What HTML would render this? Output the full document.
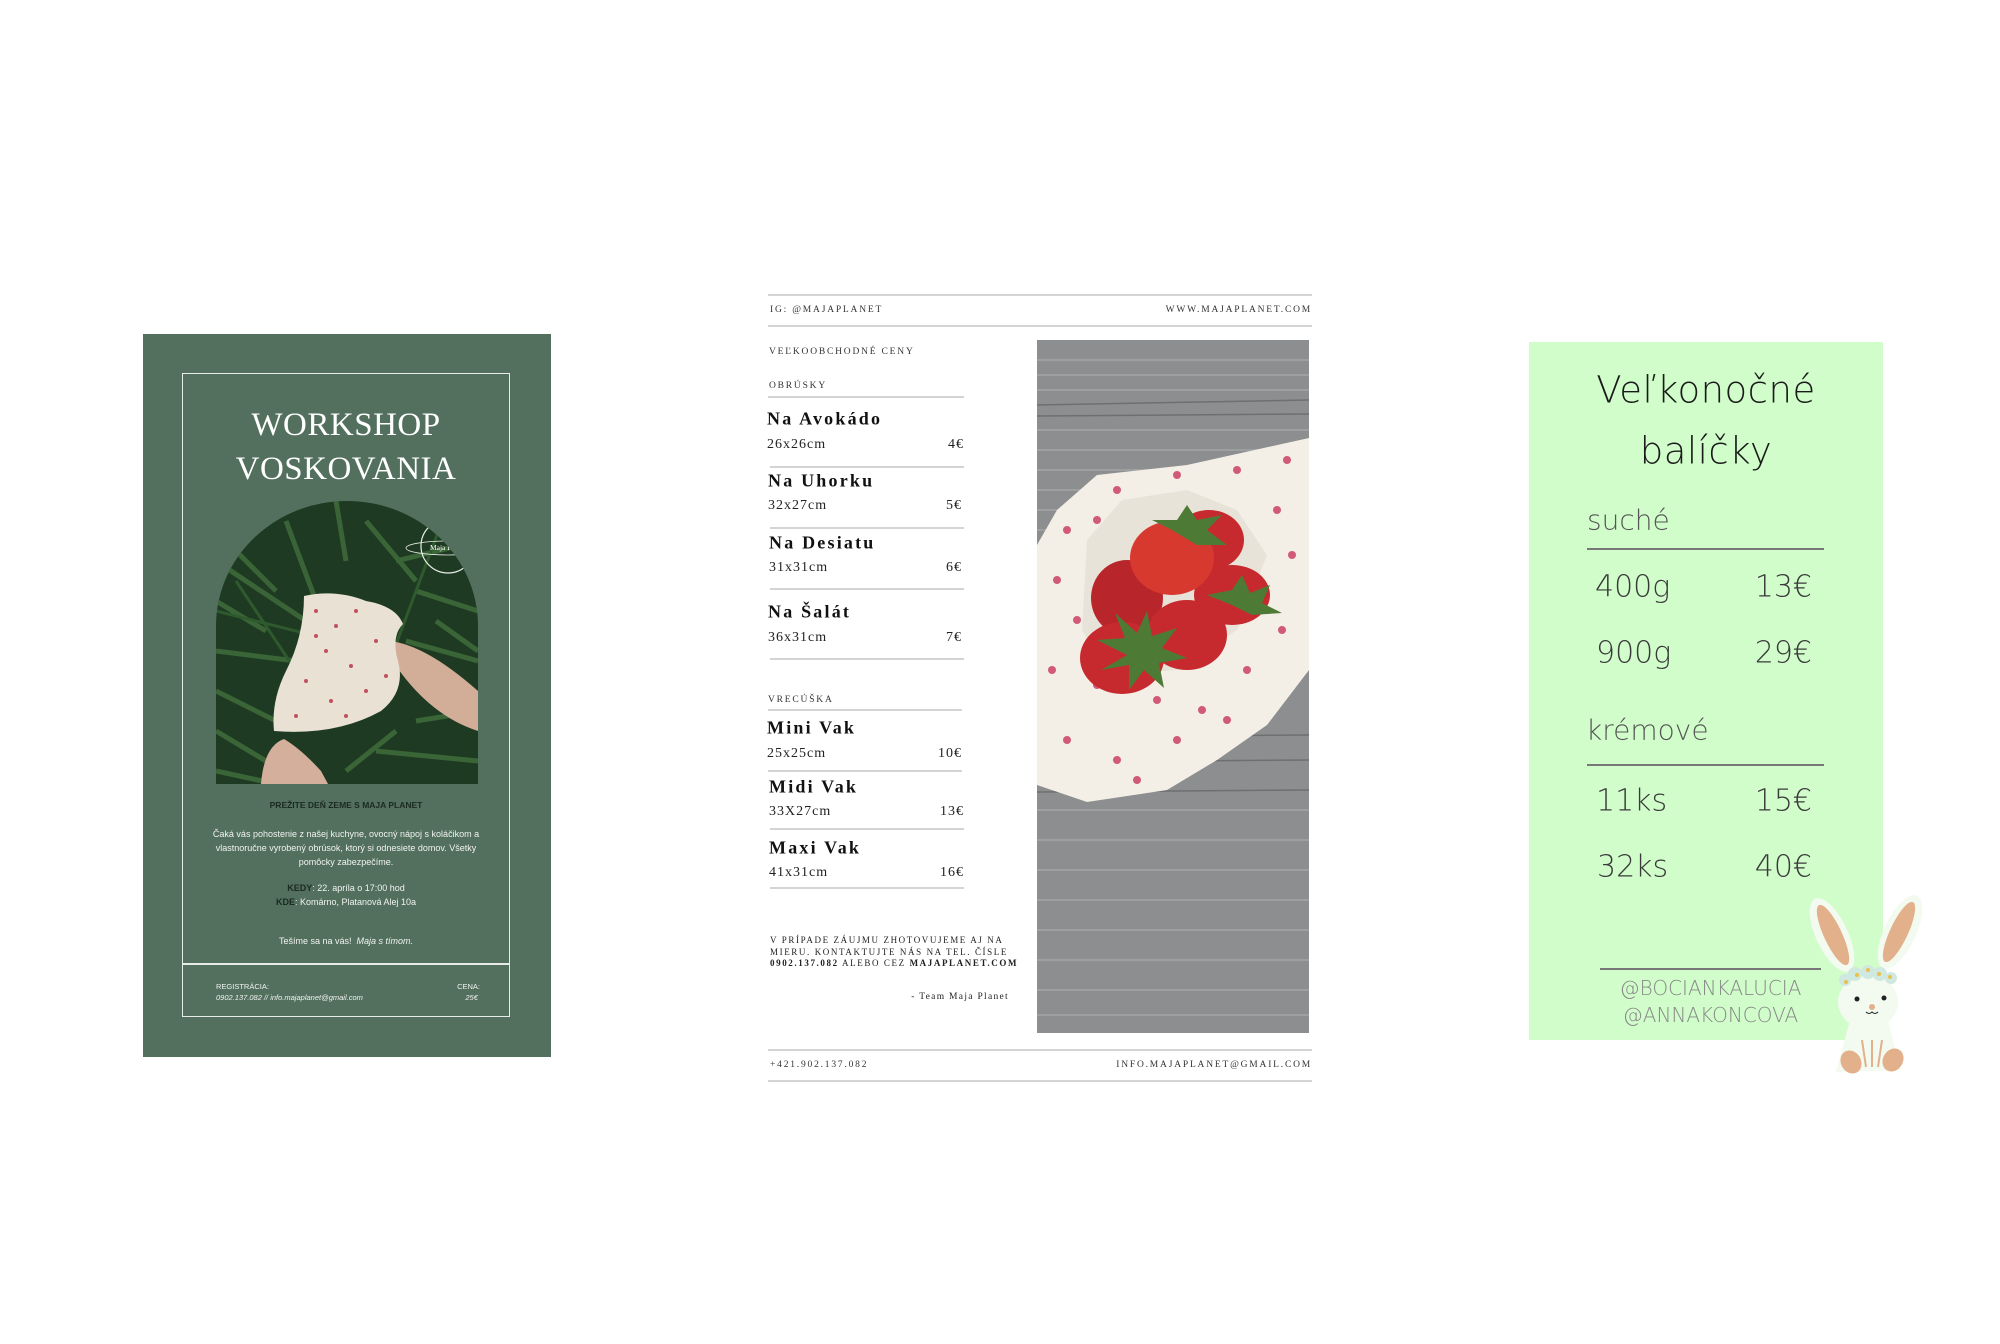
<!DOCTYPE html>
<html><head><meta charset="utf-8"><style>
*{margin:0;padding:0;box-sizing:border-box}
body{width:2000px;height:1344px;background:#fff;position:relative;overflow:hidden;font-family:"Liberation Sans",sans-serif}
.a{position:absolute;white-space:nowrap}
.c1{position:absolute;left:143px;top:334px;width:408px;height:723px;background:#53705e}
.w{color:#fff}
.ser{font-family:"Liberation Serif",serif}
.hl{position:absolute;height:2px;background:#d4d4d4}
.nm{font-family:"Liberation Serif",serif;font-weight:bold;font-size:18px;letter-spacing:2.2px;color:#111;transform:translateY(-50%)}
.sz{font-family:"Liberation Serif",serif;font-size:14px;letter-spacing:1px;color:#222;transform:translateY(-50%)}
.cap{font-family:"Liberation Serif",serif;font-size:9.5px;letter-spacing:1.8px;color:#333;transform:translateY(-50%)}
.j{font-family:"DejaVu Sans","Liberation Sans",sans-serif;font-weight:200;color:#3a3a3a;transform:translateY(-50%)}
</style></head><body>

<!-- CARD 1 -->
<div class="c1"></div>
<div class="a" style="left:182px;top:373px;width:328px;height:644px;border:1.5px solid #e8ede9"></div>
<div class="a" style="left:182px;top:963px;width:328px;height:1.5px;background:#e8ede9"></div>
<div class="a w ser" style="left:182px;width:328px;text-align:center;top:406px;font-size:33px;line-height:38px;letter-spacing:0.5px">WORKSHOP</div>
<div class="a w ser" style="left:182px;width:328px;text-align:center;top:450px;font-size:33px;line-height:38px;letter-spacing:0.5px">VOSKOVANIA</div>
<svg class="a" style="left:216px;top:501px" width="262" height="283" viewBox="0 0 262 283">
<defs><clipPath id="arch"><path d="M0 283 V125 A131 125 0 0 1 262 125 V283 Z"/></clipPath></defs>
<g clip-path="url(#arch)">
<rect width="262" height="283" fill="#1f3a22"/>
<g stroke="#3d6a3a" stroke-width="5" fill="none" opacity="0.9">
<path d="M0 60 L90 120 M10 40 L60 90 M0 150 L80 160 M0 190 L60 220 M0 230 L50 260 M0 100 L50 130"/>
<path d="M70 20 L100 100 M120 0 L130 60 M150 20 L200 80 M180 60 L262 40 M200 90 L262 110 M220 120 L262 150 M190 140 L262 160"/>
<path d="M160 250 L262 260 M200 220 L262 210 M0 270 L60 283 M130 270 L180 230"/>
</g>
<g stroke="#2e5a2d" stroke-width="3" fill="none"><path d="M20 80 L100 200 M230 10 L170 170 M0 110 L120 140"/></g>
<path d="M160 140 Q200 135 262 190 L262 230 Q215 215 180 165 Z" fill="#d2ad98"/>
<path d="M45 283 Q48 245 68 238 Q85 248 105 270 L112 283 Z" fill="#d4b09c"/>
<path d="M88 95 Q120 88 150 100 Q180 105 187 123 Q175 135 182 160 Q190 190 165 210 Q120 235 58 230 Q55 200 70 170 Q88 135 88 95 Z" fill="#e8e1d4"/>
<g fill="#c0505e"><circle cx="100" cy="110" r="2"/><circle cx="120" cy="125" r="2"/><circle cx="140" cy="110" r="2"/><circle cx="160" cy="140" r="2"/><circle cx="110" cy="150" r="2"/><circle cx="135" cy="165" r="2"/><circle cx="90" cy="180" r="2"/><circle cx="150" cy="190" r="2"/><circle cx="115" cy="200" r="2"/><circle cx="80" cy="215" r="2"/><circle cx="170" cy="175" r="2"/><circle cx="130" cy="215" r="2"/><circle cx="100" cy="135" r="2"/></g>
<circle cx="232" cy="45" r="27" fill="none" stroke="#e8ede9" stroke-width="1.2"/>
<ellipse cx="232" cy="47" rx="42" ry="7" fill="none" stroke="#e8ede9" stroke-width="0.8"/>
<text x="232" y="49" font-family="Liberation Serif" font-size="7.5" fill="#fff" text-anchor="middle">Maja Planet</text>
</g></svg>
<div class="a" style="left:182px;width:328px;text-align:center;top:800px;font-size:8.5px;font-weight:bold;color:#1b2a20">PREŽITE DEŇ ZEME S MAJA PLANET</div>
<div class="a w" style="left:182px;width:328px;text-align:center;top:827px;font-size:9px;line-height:14px;white-space:normal;padding:0 24px;color:#f0f3f0">Čaká vás pohostenie z našej kuchyne, ovocný nápoj s koláčikom a vlastnoručne vyrobený obrúsok, ktorý si odnesiete domov. Všetky pomôcky zabezpečíme.</div>
<div class="a" style="left:182px;width:328px;text-align:center;top:881px;font-size:9px;line-height:14px;color:#f0f3f0"><b style="color:#1b2a20">KEDY</b>: 22. apríla o 17:00 hod<br><b style="color:#1b2a20">KDE</b>: Komárno, Platanová Alej 10a</div>
<div class="a" style="left:182px;width:328px;text-align:center;top:936px;font-size:9px;color:#f0f3f0">Tešíme sa na vás!&nbsp; <i>Maja s tímom.</i></div>
<div class="a" style="left:216px;top:981px;font-size:7.5px;line-height:11px;color:#f0f3f0">REGISTRÁCIA:<br><i>0902.137.082 // info.majaplanet@gmail.com</i></div>
<div class="a" style="left:450px;width:30px;text-align:right;top:981px;font-size:7.5px;line-height:11px;color:#f0f3f0">CENA:<br><i>25€</i>&nbsp;</div>

<!-- CARD 2 -->
<div class="hl" style="left:768px;top:294px;width:544px"></div>
<div class="hl" style="left:768px;top:325px;width:544px"></div>
<div class="a cap" style="left:770px;top:310px">IG: @MAJAPLANET</div>
<div class="a cap" style="right:688px;top:310px">WWW.MAJAPLANET.COM</div>
<div class="a cap" style="left:769px;top:352px">VEĽKOOBCHODNÉ CENY</div>
<div class="a cap" style="left:769px;top:386px">OBRÚSKY</div>
<div class="hl" style="left:768px;top:396px;width:196px"></div>
<div class="a nm" style="left:767px;top:419px">Na Avokádo</div>
<div class="a sz" style="left:767px;top:445px">26x26cm</div><div class="a sz" style="right:1036px;top:445px">4€</div>
<div class="hl" style="left:770px;top:466px;width:194px"></div>
<div class="a nm" style="left:768px;top:481px">Na Uhorku</div>
<div class="a sz" style="left:768px;top:506px">32x27cm</div><div class="a sz" style="right:1038px;top:506px">5€</div>
<div class="hl" style="left:770px;top:527px;width:194px"></div>
<div class="a nm" style="left:769px;top:543px">Na Desiatu</div>
<div class="a sz" style="left:769px;top:568px">31x31cm</div><div class="a sz" style="right:1038px;top:568px">6€</div>
<div class="hl" style="left:770px;top:588px;width:194px"></div>
<div class="a nm" style="left:768px;top:612px">Na Šalát</div>
<div class="a sz" style="left:768px;top:638px">36x31cm</div><div class="a sz" style="right:1038px;top:638px">7€</div>
<div class="hl" style="left:770px;top:658px;width:194px"></div>
<div class="a cap" style="left:768px;top:700px">VRECÚŠKA</div>
<div class="hl" style="left:768px;top:709px;width:194px"></div>
<div class="a nm" style="left:767px;top:728px">Mini Vak</div>
<div class="a sz" style="left:767px;top:754px">25x25cm</div><div class="a sz" style="right:1038px;top:754px">10€</div>
<div class="hl" style="left:768px;top:770px;width:194px"></div>
<div class="a nm" style="left:769px;top:787px">Midi Vak</div>
<div class="a sz" style="left:769px;top:812px">33X27cm</div><div class="a sz" style="right:1036px;top:812px">13€</div>
<div class="hl" style="left:770px;top:828px;width:194px"></div>
<div class="a nm" style="left:769px;top:848px">Maxi Vak</div>
<div class="a sz" style="left:769px;top:873px">41x31cm</div><div class="a sz" style="right:1036px;top:873px">16€</div>
<div class="hl" style="left:770px;top:887px;width:194px"></div>
<div class="a" style="left:770px;top:935px;font-family:'Liberation Serif',serif;font-size:9px;line-height:11.5px;letter-spacing:1.6px;color:#222">V PRÍPADE ZÁUJMU ZHOTOVUJEME AJ NA<br>MIERU. KONTAKTUJTE NÁS NA TEL. ČÍSLE<br><b>0902.137.082</b> ALEBO CEZ <b>MAJAPLANET.COM</b></div>
<div class="a" style="right:991px;top:992px;font-family:'Liberation Serif',serif;font-size:9.5px;letter-spacing:1.3px;color:#222">- Team Maja Planet</div>
<svg class="a" style="left:1037px;top:340px" width="272" height="693" viewBox="0 0 272 693">
<rect width="272" height="693" fill="#8d8e90"/>
<g stroke="#a3a4a6" stroke-width="2" opacity="0.8">
<path d="M0 20 H272 M0 35 H272 M0 50 H272 M0 90 H272 M0 110 H272 M0 130 H272 M0 150 H272 M0 170 H272 M0 190 H272 M0 470 H272 M0 500 H272 M0 530 H272 M0 560 H272 M0 590 H272 M0 620 H272 M0 650 H272 M0 675 H272"/></g>
<g stroke="#6e6f71" stroke-width="1.5"><path d="M0 65 L272 60 M0 76 L272 74 M0 397 L272 395 M0 422 L272 420 M0 452 L272 450"/></g>
<path d="M0 205 L20 170 L60 135 L150 125 L272 98 L272 330 L230 385 L180 420 L130 450 L50 462 L0 445 Z" fill="#f3efe6"/>
<path d="M85 160 L150 150 L200 170 L230 215 L200 290 L140 330 L70 335 L45 290 L50 200 Z" fill="#e8e3d8"/>
<g fill="#d05a78"><circle cx="30" cy="190" r="4"/><circle cx="80" cy="150" r="4"/><circle cx="140" cy="135" r="4"/><circle cx="200" cy="130" r="4"/><circle cx="250" cy="120" r="4"/><circle cx="240" cy="170" r="4"/><circle cx="255" cy="215" r="4"/><circle cx="20" cy="240" r="4"/><circle cx="40" cy="280" r="4"/><circle cx="15" cy="330" r="4"/><circle cx="60" cy="345" r="4"/><circle cx="120" cy="360" r="4"/><circle cx="165" cy="370" r="4"/><circle cx="210" cy="330" r="4"/><circle cx="245" cy="290" r="4"/><circle cx="30" cy="400" r="4"/><circle cx="80" cy="420" r="4"/><circle cx="140" cy="400" r="4"/><circle cx="190" cy="380" r="4"/><circle cx="100" cy="440" r="4"/><circle cx="220" cy="250" r="4"/><circle cx="60" cy="180" r="4"/></g>
<g fill="#c72a2e">
<ellipse cx="172" cy="200" rx="35" ry="30"/>
<ellipse cx="90" cy="258" rx="36" ry="38" fill="#b8262b"/>
<ellipse cx="195" cy="255" rx="38" ry="30"/>
<ellipse cx="150" cy="295" rx="40" ry="35"/>
<ellipse cx="85" cy="318" rx="42" ry="36"/>
<ellipse cx="135" cy="218" rx="42" ry="37" fill="#d7392f"/>
</g>
<g fill="#4d7a35"><path d="M90 315 l-30 -15 l28 -2 l-10 -25 l22 20 l10 -22 l5 25 l25 -8 l-15 20 l25 10 l-28 5 l5 25 l-20 -18 l-15 20 l0 -25 l-28 5 z"/><path d="M135 190 l-20 -10 l25 0 l10 -15 l10 15 l25 -5 l-15 15 l20 15 l-30 0 z"/><path d="M195 265 l-25 -10 l25 -5 l10 -15 l8 18 l20 -8 l-8 18 l20 10 l-30 2 z"/></g>
</svg>
<div class="hl" style="left:768px;top:1049px;width:544px"></div>
<div class="hl" style="left:768px;top:1080px;width:544px"></div>
<div class="a cap" style="left:770px;top:1065px">+421.902.137.082</div>
<div class="a cap" style="right:688px;top:1065px">INFO.MAJAPLANET@GMAIL.COM</div>

<!-- CARD 3 -->
<div class="a" style="left:1529px;top:342px;width:354px;height:698px;background:#d1fdcb"></div>
<div class="a j" style="left:1529px;width:354px;text-align:center;top:390px;font-size:37px;color:#1a1a1a;letter-spacing:0.5px">Veľkonočné</div>
<div class="a j" style="left:1529px;width:354px;text-align:center;top:451px;font-size:37px;color:#1a1a1a;letter-spacing:0.5px">balíčky</div>
<div class="a j" style="left:1587px;top:520px;font-size:28px;color:#555">suché</div>
<div class="a" style="left:1587px;top:548px;width:237px;height:1.5px;background:#777"></div>
<div class="a j" style="left:1595px;top:587px;font-size:30px">400g</div><div class="a j" style="right:188px;top:587px;font-size:30px">13€</div>
<div class="a j" style="left:1596px;top:653px;font-size:30px">900g</div><div class="a j" style="right:188px;top:653px;font-size:30px">29€</div>
<div class="a j" style="left:1586px;top:730px;font-size:28px;color:#555">krémové</div>
<div class="a" style="left:1587px;top:764px;width:237px;height:1.5px;background:#777"></div>
<div class="a j" style="left:1596px;top:801px;font-size:30px">11ks</div><div class="a j" style="right:188px;top:801px;font-size:30px">15€</div>
<div class="a j" style="left:1597px;top:867px;font-size:30px">32ks</div><div class="a j" style="right:188px;top:867px;font-size:30px">40€</div>
<div class="a" style="left:1600px;top:968px;width:221px;height:1.5px;background:#777"></div>
<div class="a j" style="left:1600px;width:221px;text-align:center;top:988px;font-size:20px;color:#888">@BOCIANKALUCIA</div>
<div class="a j" style="left:1600px;width:221px;text-align:center;top:1015px;font-size:20px;color:#888">@ANNAKONCOVA</div>
<svg class="a" style="left:1800px;top:890px" width="140" height="200" viewBox="0 0 140 200">
<g fill="#f3faf0"><ellipse cx="32" cy="45" rx="16" ry="40" transform="rotate(-25 32 45)"/><ellipse cx="100" cy="42" rx="16" ry="40" transform="rotate(25 100 42)"/>
<ellipse cx="68" cy="112" rx="30" ry="27"/><path d="M50 130 Q68 125 88 130 L100 180 L36 182 Z"/></g>
<g fill="#e3b08c"><ellipse cx="33" cy="45" rx="9" ry="33" transform="rotate(-25 33 45)"/><ellipse cx="99" cy="42" rx="9" ry="33" transform="rotate(25 99 42)"/>
<ellipse cx="51" cy="172" rx="10" ry="12" transform="rotate(-30 51 172)"/><ellipse cx="93" cy="170" rx="10" ry="12" transform="rotate(30 93 170)"/><circle cx="72" cy="117" r="3"/></g>
<g fill="#cfe8e0"><circle cx="45" cy="90" r="6"/><circle cx="55" cy="84" r="7"/><circle cx="68" cy="82" r="7"/><circle cx="80" cy="84" r="7"/><circle cx="91" cy="88" r="6"/></g>
<g fill="#e8c24a"><circle cx="46" cy="92" r="2"/><circle cx="57" cy="85" r="2"/><circle cx="68" cy="80" r="2"/><circle cx="79" cy="84" r="2"/><circle cx="90" cy="87" r="2"/></g>
<circle cx="57" cy="109" r="2.5" fill="#222"/><circle cx="84" cy="108" r="2.5" fill="#222"/>
<path d="M66 122 q3 3 6 0 q3 3 6 0" stroke="#222" fill="none" stroke-width="1"/>
<path d="M62 150 L66 177 M72 150 L72 177 M82 150 L78 177" stroke="#e3b08c" stroke-width="2" fill="none"/>
</svg>
</body></html>
